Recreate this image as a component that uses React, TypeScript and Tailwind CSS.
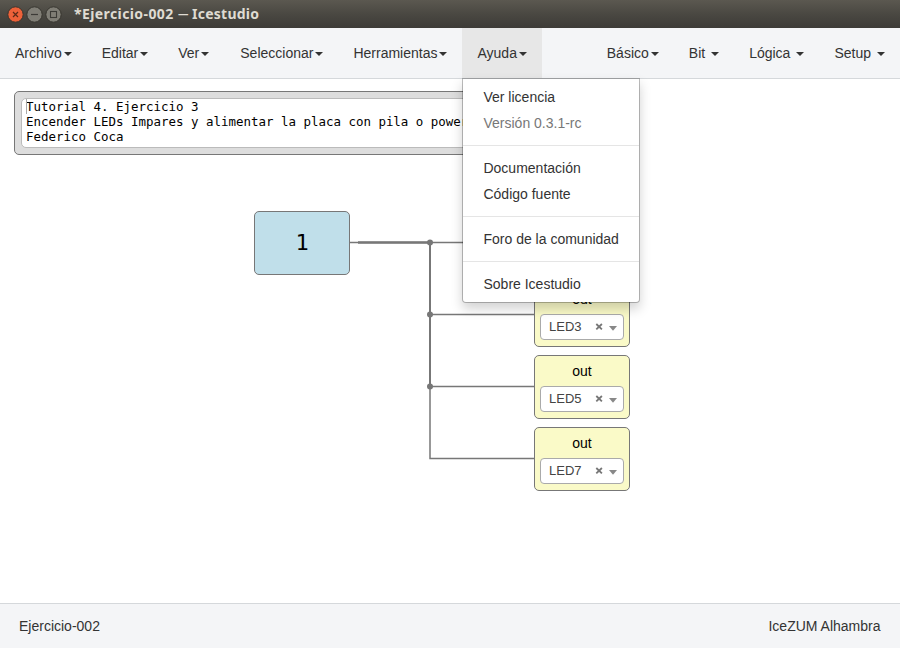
import React from "react";

const leftMenus = [
  { label: "Archivo", box: "px-[15px]" },
  { label: "Editar", box: "px-[15px]" },
  { label: "Ver", box: "pl-[15px] pr-[16px]" },
  { label: "Seleccionar", box: "px-[15px]" },
  { label: "Herramientas", box: "px-[15px]" },
  { label: "Ayuda", box: "px-[15px] bg-[#e7e7e7]" },
];
const rightMenus = [
  { label: "Básico", gap: "ml-[2px]" },
  { label: "Bit", gap: "ml-[6px]" },
  { label: "Lógica", gap: "ml-[6px]" },
  { label: "Setup", gap: "ml-[6px]" },
];

function Caret({ gap = "ml-[2px]" }: { gap?: string }) {
  return (
    <span
      className={`inline-block h-0 w-0 border-x-4 border-t-4 border-x-transparent border-t-[#333] align-middle ${gap}`}
    />
  );
}

function TitleBar() {
  return (
    <header className="flex h-7 shrink-0 items-center bg-linear-to-b from-[#5b5850] via-[#4a4842] to-[#3d3b37] pl-[7px]">
      <svg width="56" height="18" viewBox="0 0 56 18" fill="none">
        <circle cx="8.5" cy="9.5" r="7.7" fill="#ed6139" stroke="#37352f" />
        <path d="M6 7l5 5M11 7l-5 5" stroke="#5b2a18" strokeWidth="1.2" />
        <circle cx="27.5" cy="9.5" r="7.7" fill="#807e76" stroke="#37352f" />
        <path d="M24 9.5h7" stroke="#3c3b37" strokeWidth="1.2" />
        <circle cx="46.5" cy="9.5" r="7.7" fill="#807e76" stroke="#37352f" />
        <rect x="43.5" y="6.5" width="6" height="6" stroke="#3c3b37" strokeWidth="1.1" />
      </svg>
      <h1 className="ml-[11px] flex font-['Noto_Sans',sans-serif] text-[14px] leading-7 font-bold whitespace-pre text-[#dfdbd2]">
        <span className="w-[104px] tracking-[0.4px]">*Ejercicio-002 </span>
        <span className="w-[14px] origin-left scale-x-75 font-normal">—</span>
        <span className="tracking-[0.25px]">Icestudio</span>
      </h1>
    </header>
  );
}

function HelpMenu() {
  return (
    <div className="absolute top-[50px] left-0 z-20 w-[178px] rounded-b border border-black/25 bg-white bg-clip-padding py-[5px] leading-[26px] whitespace-nowrap shadow-[0_6px_12px_rgba(0,0,0,0.175)]">
      <div className="px-5">Ver licencia</div>
      <div className="px-5 text-[#777]">Versión 0.3.1-rc</div>
      <div className="my-[9px] h-px bg-[#e5e5e5]" />
      <div className="px-5">Documentación</div>
      <div className="px-5">Código fuente</div>
      <div className="my-[9px] h-px bg-[#e5e5e5]" />
      <div className="px-5">Foro de la comunidad</div>
      <div className="my-[9px] h-px bg-[#e5e5e5]" />
      <div className="px-5">Sobre Icestudio</div>
    </div>
  );
}

function NavBar() {
  return (
    <nav className="flex h-[51px] shrink-0 justify-between border-b border-[#d5d8db] bg-[#f4f5f7] leading-[50px]">
      <div className="flex">
        {leftMenus.map(({ label, box }) => (
          <div key={label} className={`relative whitespace-nowrap ${box}`}>
            {label}
            <Caret />
            {label === "Ayuda" && <HelpMenu />}
          </div>
        ))}
      </div>
      <div className="flex">
        {rightMenus.map(({ label, gap }) => (
          <div key={label} className="px-[15px] whitespace-nowrap">
            {label}
            <Caret gap={gap} />
          </div>
        ))}
      </div>
    </nav>
  );
}

function OutBlock({ pin, place }: { pin: string; place: string }) {
  return (
    <div
      className={`absolute left-[534px] flex h-16 w-24 flex-col items-center rounded-[5px] border border-[#777] bg-[#fafac8] ${place}`}
    >
      <div className="h-[30px] leading-[31px] text-black">out</div>
      <div className="flex h-[26px] w-[84px] items-center rounded border border-[#aaa] bg-white pl-2 text-[13px] text-[#444]">
        <span className="w-[46px] leading-6">{pin}</span>
        <svg width="24" height="24" viewBox="0 0 24 24">
          <path d="M1.3 9l5.6 5.4M6.9 9l-5.6 5.4" stroke="#777" strokeWidth="1.8" />
          <path d="M14 11h8l-4 4.8z" fill="#888" />
        </svg>
      </div>
    </div>
  );
}

function Canvas() {
  return (
    <main className="relative flex-1 overflow-hidden bg-white">
      <div className="absolute top-3 left-[14px] h-16 w-[560px] rounded-[5px] border border-[#777] bg-[#ddd] p-[6px]">
        <div className="h-[50px] rounded-[5px] border border-[#bbb] bg-white pl-1 font-['DejaVu_Sans_Mono',monospace] text-[12.46px] leading-[15px] whitespace-pre text-black">
          <span className="absolute top-[7px] left-[11px] h-[15px] w-px bg-[#aaa]" />
          <div>Tutorial 4. Ejercicio 3</div>
          <div>Encender LEDs Impares y alimentar la placa con pila o power</div>
          <div>Federico Coca</div>
        </div>
      </div>
      <svg className="absolute top-0 left-0" width="900" height="524" viewBox="0 79 900 524" fill="none">
        <g stroke="#777">
          <path d="M350 242.5H534" strokeWidth="1.5" />
          <path d="M358 242.5H430" strokeWidth="2.6" />
          <path d="M430 242V386" strokeWidth="2" />
          <path d="M430 386V458.5H534" strokeWidth="1.5" />
          <path d="M430 314.5H534M430 386.5H534" strokeWidth="1.5" />
        </g>
        <g fill="#777">
          <circle cx="430" cy="242.5" r="3" />
          <circle cx="430" cy="314.5" r="3" />
          <circle cx="430" cy="386.5" r="3" />
        </g>
      </svg>
      <div className="absolute top-[132px] left-[254px] flex h-16 w-24 items-center justify-center rounded-[5px] border border-[#777] bg-[#c0dfea] pb-[2px] font-['DejaVu_Sans_Mono',monospace] text-[22px] text-black">
        1
      </div>
      <OutBlock pin="LED3" place="top-[204px]" />
      <OutBlock pin="LED5" place="top-[276px]" />
      <OutBlock pin="LED7" place="top-[348px]" />
    </main>
  );
}

export default function App() {
  return (
    <div className="flex h-[648px] w-[900px] flex-col overflow-hidden bg-white font-['Liberation_Sans',Arial,sans-serif] text-[14px] text-[#333]">
      <TitleBar />
      <NavBar />
      <Canvas />
      <footer className="flex h-[45px] shrink-0 items-center justify-between border-t border-[#d5d8db] bg-[#f4f5f7] pr-[19.5px] pl-[19px]">
        <span>Ejercicio-002</span>
        <span>IceZUM Alhambra</span>
      </footer>
    </div>
  );
}
